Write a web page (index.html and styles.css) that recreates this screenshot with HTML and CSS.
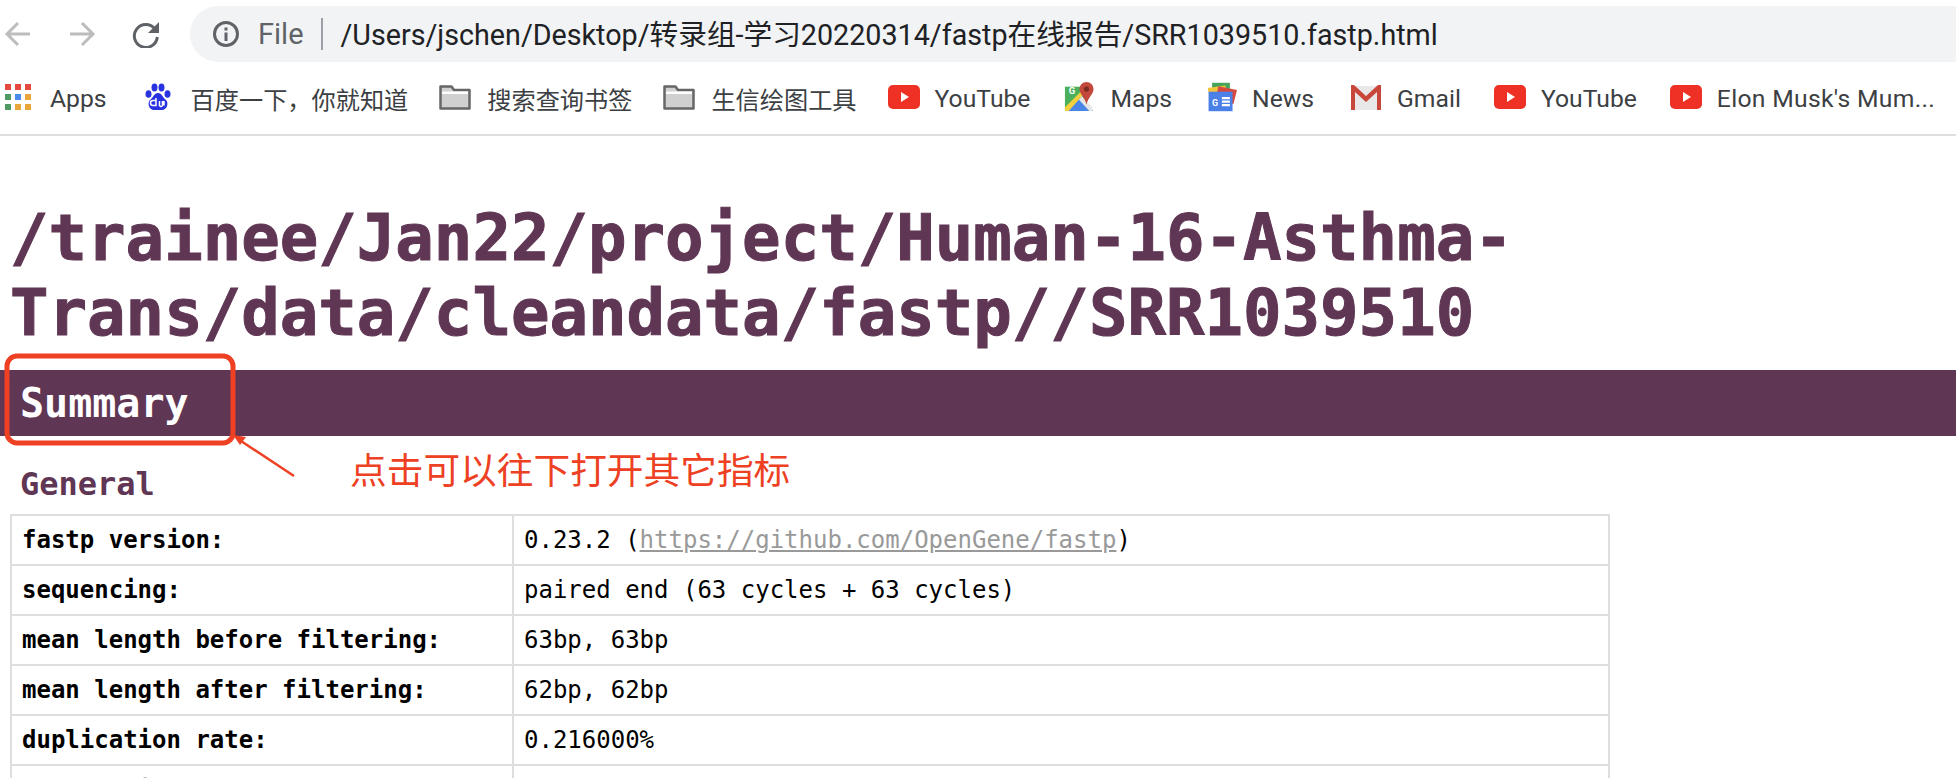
FILE: index.html
```html
<!DOCTYPE html>
<html lang="en">
<head>
<meta charset="utf-8">
<title>fastp report</title>
<link rel="stylesheet" href="styles.css">
</head>
<body>
<header class="chrome">
  <div class="toolbar">
    <div class="nav">
      <svg class="nav-icon" viewBox="0 0 28 28"><path d="M26 14H3M14 3 3 14l11 11" fill="none" stroke="#bdbdbd" stroke-width="3"/></svg>
      <svg class="nav-icon" viewBox="0 0 28 28"><path d="M2 14h23M14 3l11 11-11 11" fill="none" stroke="#bdbdbd" stroke-width="3"/></svg>
      <svg class="nav-icon" viewBox="0 0 28 28"><path d="M23 9A11.5 11.5 0 1 0 25.300 17" fill="none" stroke="#5f6368" stroke-width="3"/><path d="M27 2v11H16z" fill="#5f6368"/></svg>
    </div>
    <div class="omnibox">
      <svg class="info" viewBox="0 0 28 28"><circle cx="14" cy="14" r="11.500" fill="none" stroke="#5f6368" stroke-width="3"/><path d="M12.500 12.500h3V21h-3zM12.500 7.500h3v3h-3z" fill="#5f6368"/></svg>
      <span class="scheme">File</span>
      <span class="sep"></span>
      <span class="url">/Users/jschen/Desktop/转录组-学习20220314/fastp在线报告/SRR1039510.fastp.html</span>
    </div>
  </div>
  <nav class="bookmarks">
    <a class="bm bm-first">
      <svg class="bm-icon" viewBox="0 0 26 26"><g fill="#e4493f"><rect width="6" height="6"/><rect x="10" width="6" height="6"/><rect x="20" width="6" height="6"/></g><rect y="10" width="6" height="6" fill="#4f9a62"/><rect x="10" y="10" width="6" height="6" fill="#4a8bf0"/><rect x="20" y="10" width="6" height="6" fill="#e8a53a"/><rect y="20" width="6" height="6" fill="#4f9a62"/><rect x="10" y="20" width="6" height="6" fill="#e8a53a"/><rect x="20" y="20" width="6" height="6" fill="#e8a53a"/></svg>
      <span>Apps</span>
    </a>
    <a class="bm bm-wide bm-cjk">
      <svg class="bm-paw" viewBox="0 0 26 28"><g fill="#2932e1"><ellipse cx="3.500" cy="11" rx="3" ry="3.800"/><ellipse cx="9.500" cy="4.500" rx="3" ry="4"/><ellipse cx="16.500" cy="4.500" rx="3" ry="4"/><ellipse cx="22.500" cy="11" rx="3" ry="3.800"/><path d="M13 10c4 0 5 5 8 7 3 3 1 10-4 10H9c-5 0-7-7-4-10 3-2 4-7 8-7z"/></g><path d="M11 15v7.500H8a2.500 2.500 0 0 1 0-5h3M14.500 18v3a1.500 1.500 0 0 0 3 1.500v-4.500M19 18v4.500" fill="none" stroke="#fff" stroke-width="1.500"/></svg>
      <span>百度一下，你就知道</span>
    </a>
    <a class="bm bm-mid bm-cjk">
      <svg class="bm-folder" viewBox="0 0 32 26"><path d="M1.500 24.500V2.500h11l2.500 3.500h15.500v18.500z" fill="#d0d0d0" stroke="#666" stroke-width="2.500" stroke-linejoin="round"/><path d="M3 7.500h26v2.500H3z" fill="#fff"/></svg>
      <span>搜索查询书签</span>
    </a>
    <a class="bm bm-mid bm-cjk">
      <svg class="bm-folder" viewBox="0 0 32 26"><path d="M1.500 24.500V2.500h11l2.500 3.500h15.500v18.500z" fill="#d0d0d0" stroke="#666" stroke-width="2.500" stroke-linejoin="round"/><path d="M3 7.500h26v2.500H3z" fill="#fff"/></svg>
      <span>生信绘图工具</span>
    </a>
    <a class="bm bm-tight">
      <svg class="bm-yt" viewBox="0 0 32 28"><rect y="2" width="32" height="24" rx="5" fill="#ee3124"/><path d="M13 9l8 5-8 5z" fill="#fff"/></svg>
      <span>YouTube</span>
    </a>
    <a class="bm bm-tight">
      <svg class="bm-yt" viewBox="0 0 32 32"><path d="M1 5h21v26H1z" fill="#4caf5c"/><path d="M1 31 17 15l14 16z" fill="#4a86e8"/><path d="M1 31v-4l17-17 3 3L5 31z" fill="#f4d03f"/><path d="M19 15l11 12v4h-3L16 19z" fill="#e6e6e6"/><path d="M24 0a7.500 7.500 0 0 1 7.500 7.500C31.500 13 26 16 24 24c-2-8-7.500-11-7.500-16.500A7.500 7.500 0 0 1 24 0z" fill="#c1483a"/><circle cx="24" cy="7.500" r="2.800" fill="#7a2a20"/><text class="g-mark" x="5" y="13">G</text></svg>
      <span>Maps</span>
    </a>
    <a class="bm bm-tight">
      <svg class="bm-yt" viewBox="0 0 36 32"><path d="M8 0h20v12H8z" fill="#46a35a"/><path d="M3 6l20-3 2 14L6 20z" fill="#f2c53d"/><path d="M15 4l21 4-4 16-20-4z" fill="#d6493f"/><path d="M4 10h27v22H4z" fill="#4a80e8"/><text class="g-mark" x="8" y="26">G</text><path d="M19 16h9v2.500h-9zM19 20h9v2.500h-9zM19 24h9v2.500h-9z" fill="#fff"/></svg>
      <span>News</span>
    </a>
    <a class="bm bm-tight bm-mail">
      <svg class="bm-yt" viewBox="0 0 32 28"><path d="M2 3h28v24H2z" fill="#e8e8e8"/><path d="M1 27V2h3l12 11L28 2h3v25h-4V9L16 19 5 9v18z" fill="#c8473a"/></svg>
      <span>Gmail</span>
    </a>
    <a class="bm bm-tight">
      <svg class="bm-yt" viewBox="0 0 32 28"><rect y="2" width="32" height="24" rx="5" fill="#ee3124"/><path d="M13 9l8 5-8 5z" fill="#fff"/></svg>
      <span>YouTube</span>
    </a>
    <a class="bm bm-tight bm-long">
      <svg class="bm-yt" viewBox="0 0 32 28"><rect y="2" width="32" height="24" rx="5" fill="#ee3124"/><path d="M13 9l8 5-8 5z" fill="#fff"/></svg>
      <span>Elon Musk's Mum...</span>
    </a>
  </nav>
</header>
<main class="report">
  <h1 class="title">/trainee/Jan22/project/Human-16-Asthma-Trans/data/cleandata/fastp//SRR1039510</h1>
  <div class="banner">Summary</div>
  <h2 class="subtitle">General</h2>
  <table class="summary">
    <tr><td class="key">fastp version:</td><td class="val">0.23.2 (<a class="link">https://github.com/OpenGene/fastp</a>)</td></tr>
    <tr><td class="key">sequencing:</td><td class="val">paired end (63 cycles + 63 cycles)</td></tr>
    <tr><td class="key">mean length before filtering:</td><td class="val">63bp, 63bp</td></tr>
    <tr><td class="key">mean length after filtering:</td><td class="val">62bp, 62bp</td></tr>
    <tr><td class="key">duplication rate:</td><td class="val">0.216000%</td></tr>
    <tr><td class="key">Insert size peak:</td><td class="val"></td></tr>
  </table>
</main>
<svg class="markup" viewBox="0 0 320 140"><rect x="7" y="3" width="226" height="87" rx="10" fill="none" stroke="#ee4023" stroke-width="5"/><path d="M294 123 238 86" stroke="#ee4023" stroke-width="2.500"/><path d="M233 82l13 2-6 8z" fill="#ee4023"/></svg>
<div class="note">点击可以往下打开其它指标</div>
</body>
</html>
```
FILE: styles.css
```css
* { box-sizing: border-box; }
html, body { margin: 0; padding: 0; height: 100%; overflow: hidden; background: #fff; }
body { position: relative; font-family: Roboto, "Noto Sans CJK SC", sans-serif; }

.chrome { height: 136px; border-bottom: 2px solid #dedede; }
.toolbar { display: flex; align-items: center; height: 68px; }
.nav { display: flex; align-items: center; gap: 36px; width: 190px; padding-left: 4px; }
.nav-icon { width: 28px; height: 28px; display: block; }
.omnibox { flex: 1; height: 56px; display: flex; align-items: center; background: #f1f3f4; border-radius: 28px 0 0 28px; padding-left: 22px; }
.info { width: 28px; height: 28px; flex: none; }
.scheme { margin-left: 18px; font-size: 29px; color: #5f6368; }
.sep { width: 2px; height: 32px; background: #9aa0a6; margin: 0 18px 0 17px; }
.url { margin-top: -4px; font-size: 28.700px; color: #202124; white-space: nowrap; }

.bookmarks { display: flex; align-items: center; height: 58px; padding-left: 5px; gap: 33px; }
.bm { display: flex; align-items: center; gap: 19px; font-size: 24.700px; color: #3c4043; white-space: nowrap; }
.bm span { padding-top: 2px; }
.bm-first { margin-right: 5px; }
.bm-wide { gap: 20px; }
.bm-mid { gap: 16px; }
.bm-tight { gap: 15px; }
.bm-cjk { margin-right: -2px; font-size: 24.200px; }
.bm-mail { margin-left: 3px; }
.bm-long { letter-spacing: 0.300px; }
.bm-icon { width: 26px; height: 26px; flex: none; }
.bm-paw { width: 26px; height: 28px; flex: none; }
.bm-folder { width: 32px; height: 26px; flex: none; }
.bm-yt { width: 32px; height: 30px; flex: none; }
.g-mark { font: bold 10px Roboto, sans-serif; fill: #fff; }

.report { font-family: "DejaVu Sans Mono", monospace; }
.title { margin: 65px 0 0; padding: 0 10px; font-size: 64px; line-height: 75px; font-weight: bold; color: #5f3654; -webkit-text-stroke: 1px #5f3654; }
.banner { margin-top: 19px; height: 66px; line-height: 66px; padding-left: 20px; background: #5f3654; color: #fff; font-size: 40px; font-weight: bold; }
.subtitle { margin: 29px 0 0 20px; font-size: 32px; line-height: 38px; font-weight: bold; color: #5f3654; }
.summary { margin: 11px 0 0 10px; width: 1600px; table-layout: fixed; border-collapse: collapse; font-size: 24px; color: #000; }
.summary td { height: 50px; padding: 0 10px; border: 2px solid #dedede; }
.key { width: 502px; font-weight: bold; }
.link { color: #999; text-decoration: underline; }

.markup { position: absolute; left: 0; top: 353px; width: 320px; height: 140px; }
.note { position: absolute; left: 350px; top: 444px; font: 36.700px/48px "Noto Sans CJK SC", sans-serif; color: #ee4023; white-space: nowrap; }
```
